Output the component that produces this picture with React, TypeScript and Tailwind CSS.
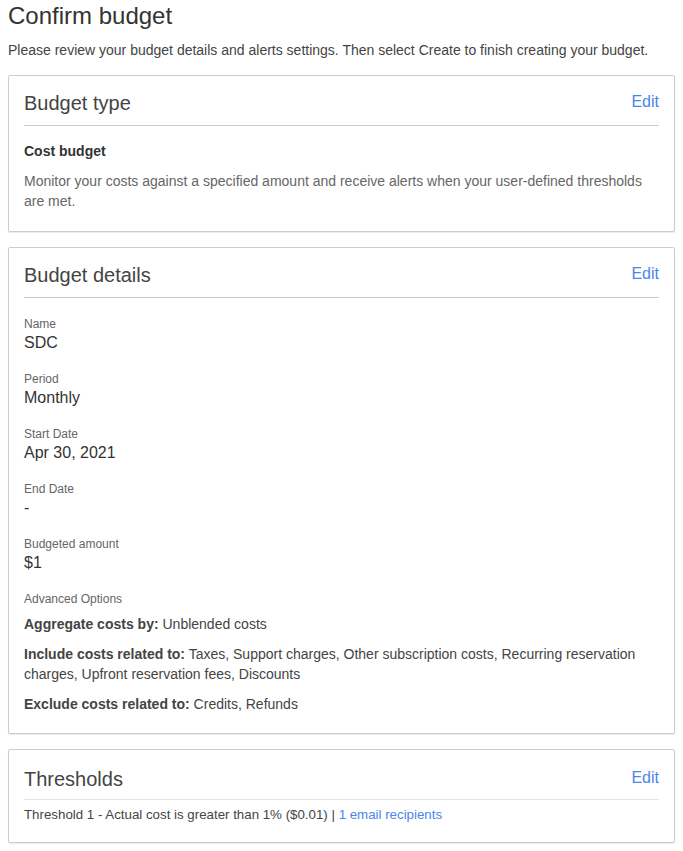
import React from "react";

function Card({ title, children, header }: { title: string; children: React.ReactNode; header: string }) {
  return (
    <div className="mt-[15px] border border-[#cccccc] rounded-[2px] px-[15px] bg-white shadow-[0_1px_1px_rgba(0,0,0,0.08)]">
      <div className={header}>
        <div className="text-[20px] leading-[28px] text-[#444]">{title}</div>
        <a className="mt-[2px] text-[16px] leading-[22px] text-[#4a86e8] cursor-pointer">Edit</a>
      </div>
      {children}
    </div>
  );
}

function Field({ label, value, first }: { label: string; value: string; first?: boolean }) {
  return (
    <div className={first ? "mt-[18px]" : "mt-[17px]"}>
      <div className="text-[12px] leading-[16px] text-[#666]">{label}</div>
      <div className="text-[16px] leading-[22px] text-[#333]">{value}</div>
    </div>
  );
}

export default function App() {
  return (
    <div className="px-2 pb-2 bg-white min-h-[851px]" style={{ fontFamily: "'Liberation Sans', Arial, sans-serif" }}>
      <h1 className="text-[24px] leading-[28px] pt-[2px] text-[#333]">Confirm budget</h1>
      <p className="mt-[10px] text-[14px] leading-[20px] text-[#444]">
        Please review your budget details and alerts settings. Then select Create to finish creating your budget.
      </p>

      <Card title="Budget type" header="flex justify-between items-start pt-[13px] pb-[8px] border-b border-[#cccccc]">
        <div className="mt-[15px] text-[14px] leading-[20px] font-bold text-[#333]">Cost budget</div>
        <div className="mt-[10px] pb-[20px] text-[14px] leading-[20px] text-[#666]">
          Monitor your costs against a specified amount and receive alerts when your user-defined thresholds are met.
        </div>
      </Card>

      <Card title="Budget details" header="flex justify-between items-start pt-[13px] pb-[8px] border-b border-[#cccccc]">
        <Field label="Name" value="SDC" first />
        <Field label="Period" value="Monthly" />
        <Field label="Start Date" value="Apr 30, 2021" />
        <Field label="End Date" value="-" />
        <Field label="Budgeted amount" value="$1" />
        <div className="mt-[17px] text-[12px] leading-[16px] text-[#666]">Advanced Options</div>
        <div className="pb-[19px] text-[14px] leading-[20px] text-[#444]">
          <div className="mt-[7px]"><span className="font-bold">Aggregate costs by:</span> Unblended costs</div>
          <div className="mt-[10px]"><span className="font-bold">Include costs related to:</span> Taxes, Support charges, Other subscription costs, Recurring reservation charges, Upfront reservation fees, Discounts</div>
          <div className="mt-[10px]"><span className="font-bold">Exclude costs related to:</span> Credits, Refunds</div>
        </div>
      </Card>

      <Card title="Thresholds" header="flex justify-between items-start pt-[15px] pb-[6px] border-b border-[#e5e5e5]">
        <div className="mt-[5px] pb-[17px] text-[13.3px] leading-[20px] text-[#444]">
          Threshold 1 - Actual cost is greater than 1% ($0.01) | <a className="text-[#4a86e8] cursor-pointer">1 email recipients</a>
        </div>
      </Card>
    </div>
  );
}
